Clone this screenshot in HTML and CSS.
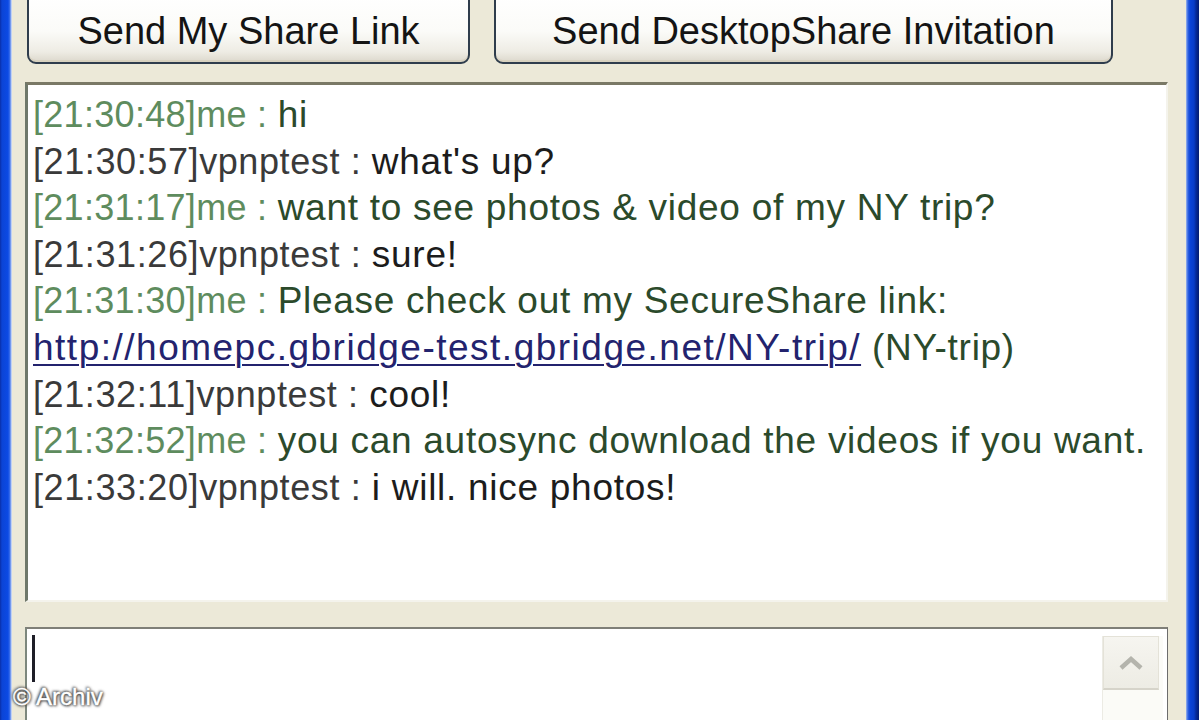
FILE: index.html
```html
<!DOCTYPE html>
<html>
<head>
<meta charset="utf-8">
<title>Chat</title>
<link rel="stylesheet" href="styles.css">
</head>
<body>
<div class="window">
  <div class="frame frame-left"></div>
  <div class="client">
    <div class="buttons">
      <button class="btn btn-share">Send My Share Link</button>
      <button class="btn btn-desktop">Send DesktopShare Invitation</button>
    </div>
    <div class="chat">
      <div class="msg me"><span class="who">[21:30:48]me : </span><span class="text">hi</span></div>
      <div class="msg peer"><span class="who">[21:30:57]vpnptest : </span><span class="text">what's up?</span></div>
      <div class="msg me"><span class="who">[21:31:17]me : </span><span class="text">want to see photos &amp; video of my NY trip?</span></div>
      <div class="msg peer"><span class="who">[21:31:26]vpnptest : </span><span class="text">sure!</span></div>
      <div class="msg me"><span class="who">[21:31:30]me : </span><span class="text">Please check out my SecureShare link:</span></div>
      <div class="msg me"><a class="link" href="#">http://homepc.gbridge-test.gbridge.net/NY-trip/</a><span class="text"> (NY-trip)</span></div>
      <div class="msg peer"><span class="who">[21:32:11]vpnptest : </span><span class="text">cool!</span></div>
      <div class="msg me"><span class="who">[21:32:52]me : </span><span class="text">you can autosync download the videos if you want.</span></div>
      <div class="msg peer"><span class="who">[21:33:20]vpnptest : </span><span class="text">i will. nice photos!</span></div>
    </div>
    <div class="input">
      <span class="caret"></span>
      <div class="scrollbar">
        <div class="scroll-up">
          <svg width="26" height="16" viewBox="0 0 26 16"><path d="M3 13 L13 4 L23 13" fill="none" stroke="#b4b4ac" stroke-width="4.5" stroke-linejoin="miter"/></svg>
        </div>
      </div>
    </div>
  </div>
  <div class="frame frame-right"></div>
  <div class="watermark">© Archiv</div>
</div>
</body>
</html>
```

FILE: styles.css
```css
html, body {
  margin: 0;
  padding: 0;
  height: 720px;
  overflow: hidden;
}

body {
  background: #ece9d8;
  font-family: "Liberation Sans", Arial, sans-serif;
}

.window {
  position: relative;
  display: flex;
  height: 720px;
  width: 1199px;
}

.frame-left {
  width: 12px;
  flex: none;
  background: linear-gradient(to right, #0a2fa8 0, #0b44d6 2px, #0c4ae4 8px, #3f72ec 10px, #a9c0f0 11px, #d8e2f4 12px);
}

.frame-right {
  width: 13px;
  flex: none;
  background: linear-gradient(to right, #9db6ee 0, #2f62e2 2px, #0b44d8 4px, #083cc8 8px, #052a9a 10px, #031c70 13px);
}

.client {
  flex: 1;
  display: flex;
  flex-direction: column;
  padding: 0 18px 0 13px;
  min-width: 0;
}

.buttons {
  display: flex;
  gap: 24px;
  margin-top: -8px;
  height: 72px;
  padding-left: 2px;
  flex: none;
}

.btn {
  height: 72px;
  border: 2px solid #2f3d4c;
  border-radius: 9px;
  background: linear-gradient(to bottom, #ffffff 0%, #fbfbf8 55%, #eeece4 85%, #dcd8cc 100%);
  font-family: "Liberation Sans", Arial, sans-serif;
  font-size: 38px;
  color: #141414;
  padding: 6px 0 0 0;
  box-shadow: inset 0 -2px 0 #d8d2c0;
}

.btn-share { width: 443px; }
.btn-desktop { width: 619px; }

.chat {
  margin-top: 18px;
  height: 520px;
  box-sizing: border-box;
  flex: none;
  background: #ffffff;
  border-top: 3px solid #7a7966;
  border-left: 3px solid #6f786a;
  border-right: 2px solid #f4f3ec;
  border-bottom: 2px solid #f4f3ec;
  padding: 7px 0 0 5px;
  font-size: 37px;
  line-height: 46.6px;
  white-space: nowrap;
  overflow: hidden;
}

.msg { height: 46.6px; }

.who { font-size: 36px; letter-spacing: 0.3px; }
.peer .who { letter-spacing: 0.6px; }
.text { letter-spacing: 0.72px; }

.me .who { color: #5e8c5e; }
.me .text { color: #2b4a2b; }
.peer .who { color: #3a3a3a; }
.peer .text { color: #1c1c1c; }

.link {
  color: #23236e;
  letter-spacing: 1.5px;
  text-decoration: underline;
  text-decoration-thickness: 2px;
  text-underline-offset: 4px;
}

.input {
  margin-top: 25px;
  flex: 1;
  display: flex;
  justify-content: space-between;
  background: #ffffff;
  border-top: 2px solid #7f7f78;
  border-left: 2px solid #7d877d;
  border-right: 1px solid #6c6c6c;
}

.caret {
  display: block;
  width: 3px;
  height: 47px;
  margin: 6px 0 0 5px;
  background: #1e1e28;
}

.scrollbar {
  width: 60px;
  margin: 7px 4px 0 0;
  background: #fbfbf7;
  border-left: 1px solid #ecebe4;
}

.scroll-up {
  width: 56px;
  height: 54px;
  box-sizing: border-box;
  background: linear-gradient(to bottom, #f6f5f0, #edece4);
  border: 1px solid #e4e2d8;
  border-bottom: 2px solid #d6d4ca;
  display: flex;
  align-items: center;
  justify-content: center;
}

.watermark {
  position: absolute;
  left: 13px;
  top: 683px;
  font-family: "Liberation Sans", Arial, sans-serif;
  font-size: 24px;
  color: #ffffff;
  -webkit-text-stroke: 0.4px #ffffff;
  text-shadow: 0 0 2px #444, 0 0 3px #555, 1px 1px 3px #444, -1px -1px 3px #666;
}
```
